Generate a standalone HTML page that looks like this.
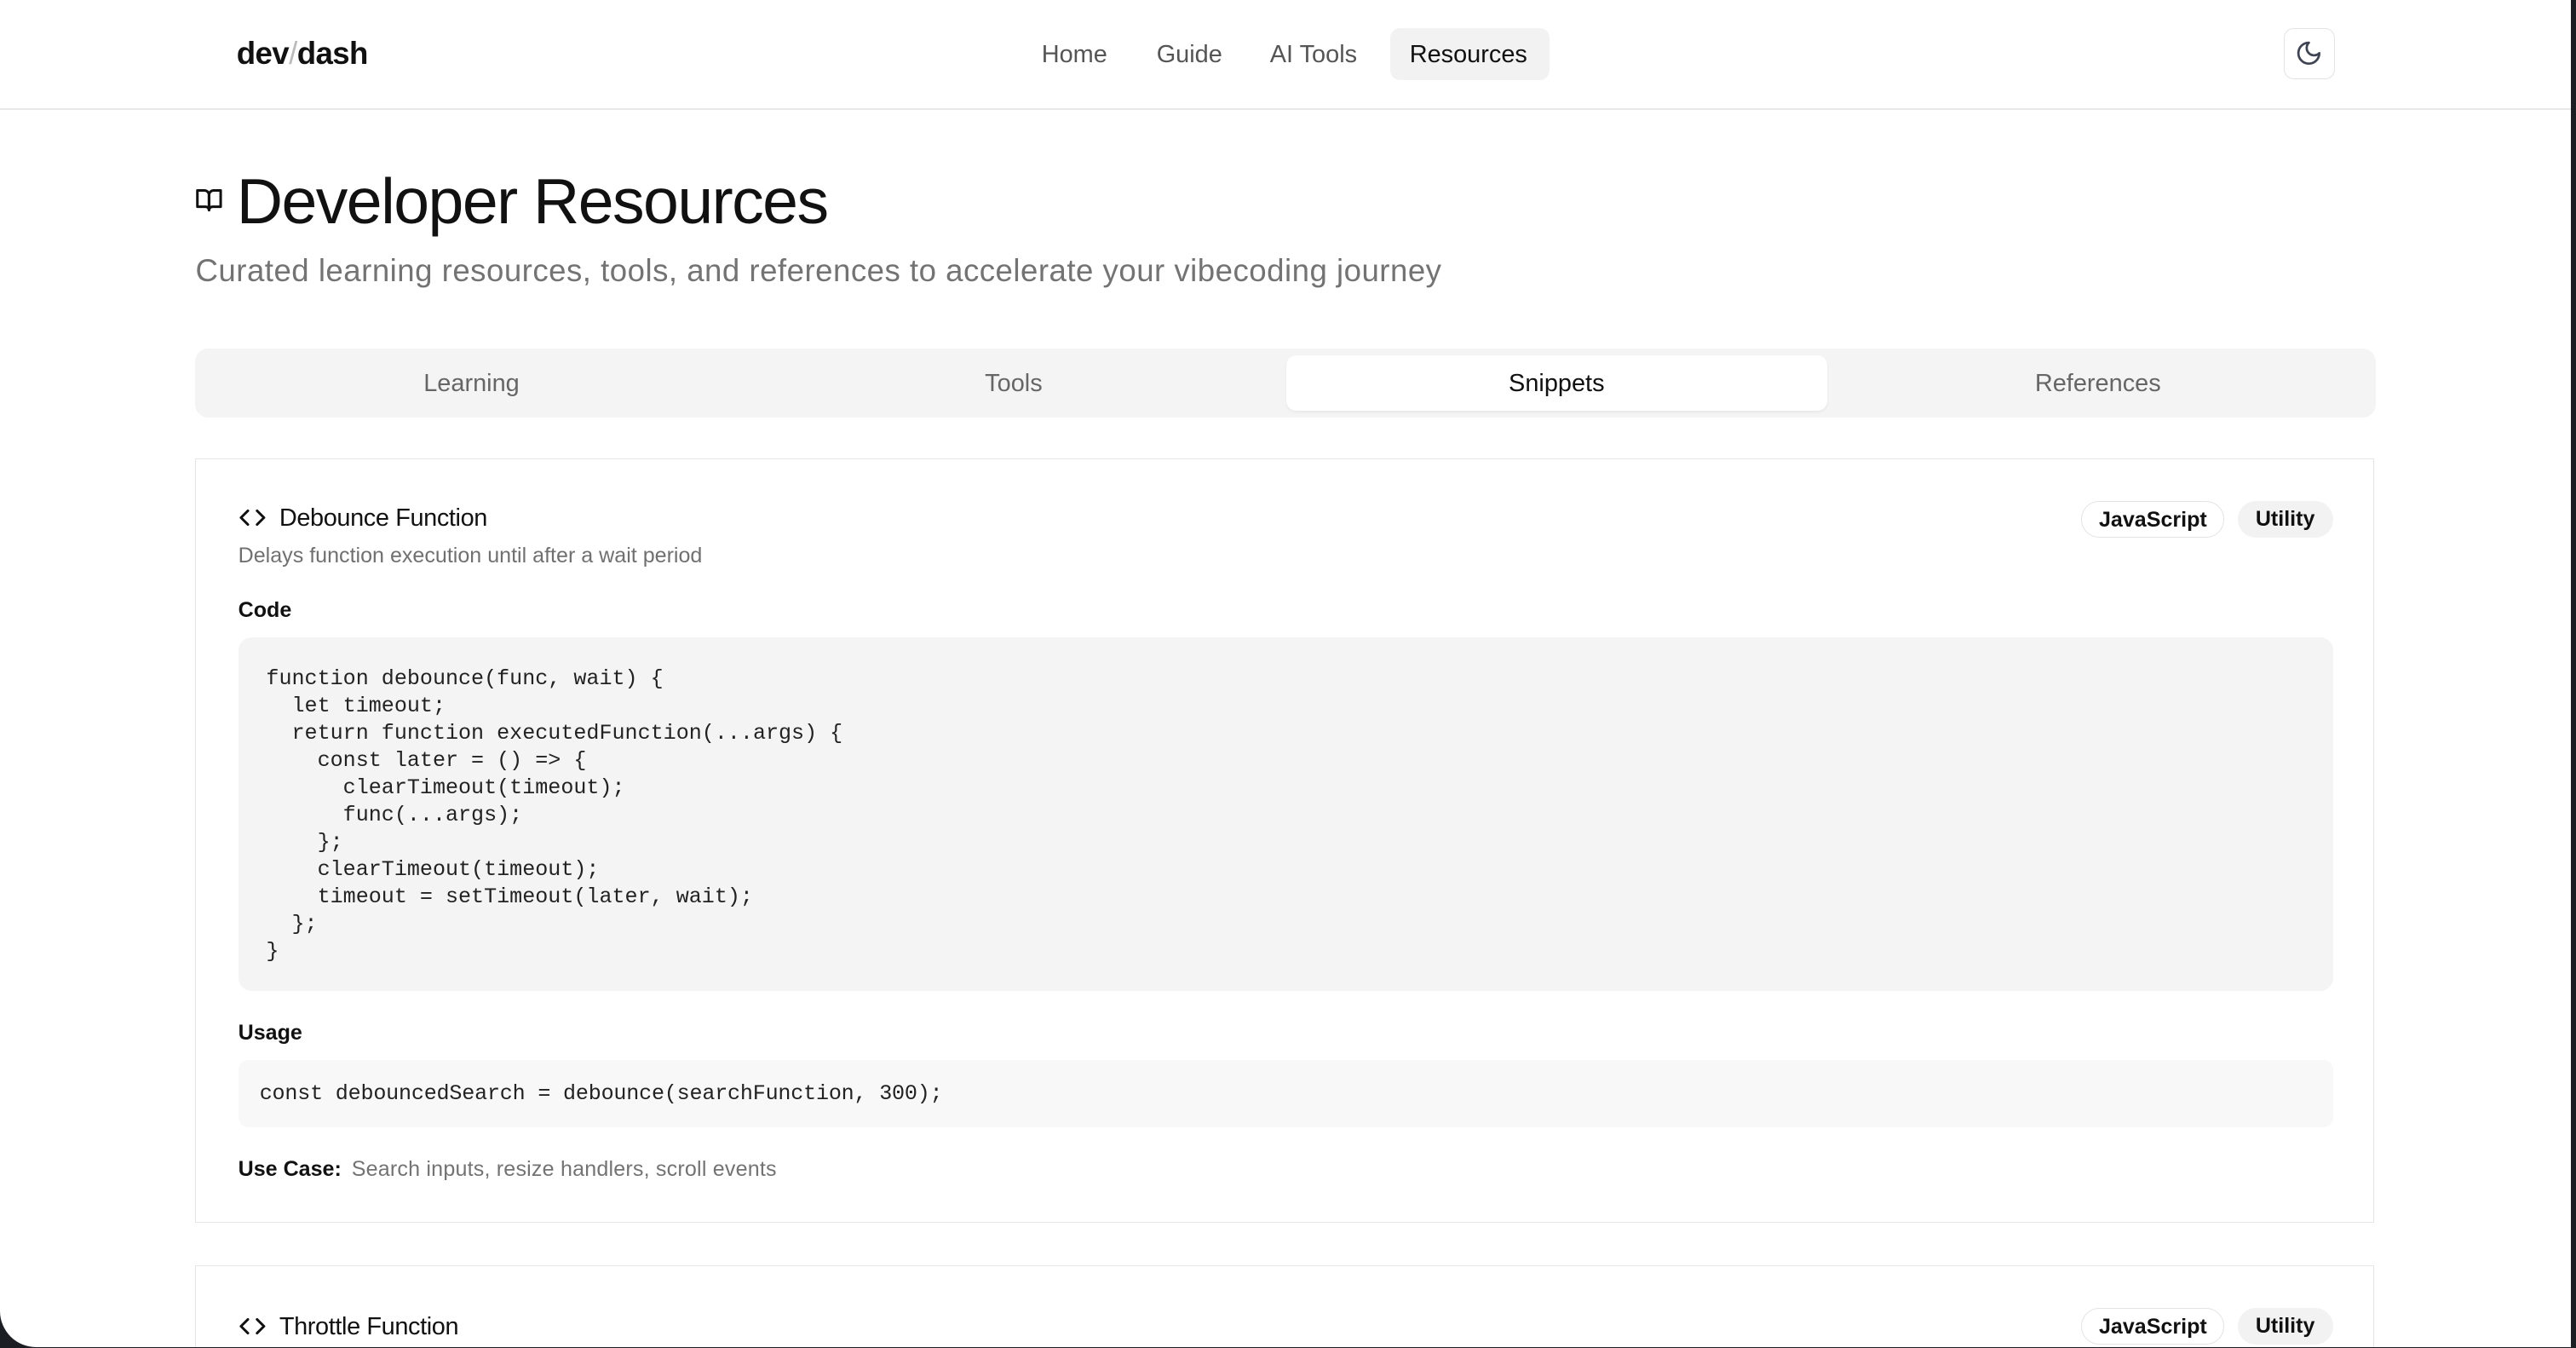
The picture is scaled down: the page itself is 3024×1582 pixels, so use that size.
<!DOCTYPE html>
<html><head><meta charset="utf-8"><style>
html,body{margin:0;padding:0;}
body{width:3024px;height:1582px;overflow:hidden;background:#1b1e22;font-family:"Liberation Sans",sans-serif;}
#z{zoom:1.92857;width:1568px;height:820px;position:relative;overflow:hidden;}
#page{position:absolute;left:0;top:0;width:1565px;height:820px;background:#fff;border-radius:0 0 0 22px;overflow:hidden;color:#111;}
.a{position:absolute;white-space:nowrap;}
.nav{font-size:15px;color:#555;top:25px;}
.mono{font-family:"Liberation Mono",monospace;font-size:13px;color:#222;}
.badge{position:absolute;height:22px;line-height:22px;border-radius:11px;font-size:13px;font-weight:bold;text-align:center;box-sizing:border-box;}
.lbl{font-size:13px;font-weight:bold;}
</style></head><body><div id="z"><div id="page">
<div class="a" style="left:0;top:66px;width:1565px;height:1px;background:#e8e8e8"></div>
<div class="a" style="left:144px;top:22px;font-size:19px;font-weight:bold;letter-spacing:-0.3px">dev<span style="color:#bbb;font-weight:normal">/</span>dash</div>
<div class="a nav" style="left:634px">Home</div>
<div class="a nav" style="left:704px">Guide</div>
<div class="a nav" style="left:773px">AI Tools</div>
<div class="a" style="left:846px;top:17px;width:97px;height:32px;background:#f2f2f2;border-radius:6px"></div>
<div class="a nav" style="left:858px;color:#111">Resources</div>
<div class="a" style="left:1390px;top:17px;width:30px;height:30px;border:1px solid #e3e3e6;border-radius:6px"></div>
<svg class="a" style="left:1397px;top:24px" width="17" height="17" viewBox="0 0 24 24" fill="none" stroke="#3f4452" stroke-width="2" stroke-linecap="round" stroke-linejoin="round"><path d="M12 3a6 6 0 0 0 9 9 9 9 0 1 1-9-9Z"/></svg>

<svg class="a" style="left:119px;top:113px" width="17" height="17" viewBox="0 0 24 24" fill="none" stroke="#111" stroke-width="2.2" stroke-linejoin="round"><path d="M2 4h6a4 4 0 0 1 4 4v13a3 3 0 0 0-3-3H2z"/><path d="M22 4h-6a4 4 0 0 0-4 4v13a3 3 0 0 1 3-3h7z"/></svg>
<div class="a" style="left:144px;top:100px;font-size:39px;letter-spacing:-0.8px">Developer Resources</div>
<div class="a" style="left:119px;top:154px;font-size:19px;color:#737373;letter-spacing:0.25px">Curated learning resources, tools, and references to accelerate your vibecoding journey</div>

<div class="a" style="left:119px;top:212px;width:1327px;height:42px;background:#f4f4f4;border-radius:8px"></div>
<div class="a" style="left:783px;top:216px;width:329px;height:34px;background:#fff;border-radius:6px;box-shadow:0 1px 2px rgba(0,0,0,.05)"></div>
<div class="a" style="left:119px;top:225px;width:336px;text-align:center;font-size:15px;color:#666">Learning</div>
<div class="a" style="left:451px;top:225px;width:332px;text-align:center;font-size:15px;color:#666">Tools</div>
<div class="a" style="left:783px;top:225px;width:329px;text-align:center;font-size:15px;color:#111">Snippets</div>
<div class="a" style="left:1112px;top:225px;width:330px;text-align:center;font-size:15px;color:#666">References</div>

<div class="a" style="left:119px;top:279px;width:1325px;height:464px;border:1px solid #e5e5e5"></div>
<svg class="a" style="left:145px;top:308px" width="17" height="14" viewBox="0 0 24 20" fill="none" stroke="#111" stroke-width="2.2" stroke-linecap="round" stroke-linejoin="round"><path d="M8 4 2 10l6 6M16 4l6 6-6 6"/></svg>
<div class="a" style="left:170px;top:307px;font-size:15px;letter-spacing:-0.2px">Debounce Function</div>
<div class="a" style="left:145px;top:331px;font-size:13px;color:#707070">Delays function execution until after a wait period</div>
<div class="badge" style="left:1267px;top:305px;width:87px;border:1px solid #e3e3e3">JavaScript</div>
<div class="badge" style="left:1362px;top:305px;width:58px;background:#f2f2f2">Utility</div>
<div class="a lbl" style="left:145px;top:364px">Code</div>
<div class="a" style="left:145px;top:388px;width:1275px;height:215px;background:#f4f4f4;border-radius:8px"></div>
<pre class="a mono" style="left:162px;top:405px;margin:0;line-height:16.6px;white-space:pre">function debounce(func, wait) {
  let timeout;
  return function executedFunction(...args) {
    const later = () =&gt; {
      clearTimeout(timeout);
      func(...args);
    };
    clearTimeout(timeout);
    timeout = setTimeout(later, wait);
  };
}</pre>
<div class="a lbl" style="left:145px;top:621px">Usage</div>
<div class="a" style="left:145px;top:645px;width:1275px;height:41px;background:#f8f8f8;border-radius:6px"></div>
<div class="a mono" style="left:158px;top:658px;letter-spacing:-0.1px">const debouncedSearch = debounce(searchFunction, 300);</div>
<div class="a lbl" style="left:145px;top:704px">Use Case:</div>
<div class="a" style="left:214px;top:704px;font-size:13px;color:#737373;letter-spacing:0.1px">Search inputs, resize handlers, scroll events</div>

<div class="a" style="left:119px;top:770px;width:1325px;height:60px;border:1px solid #e5e5e5;border-bottom:none"></div>
<svg class="a" style="left:145px;top:800px" width="17" height="14" viewBox="0 0 24 20" fill="none" stroke="#111" stroke-width="2.2" stroke-linecap="round" stroke-linejoin="round"><path d="M8 4 2 10l6 6M16 4l6 6-6 6"/></svg>
<div class="a" style="left:170px;top:799px;font-size:15px;letter-spacing:-0.2px">Throttle Function</div>
<div class="badge" style="left:1267px;top:796px;width:87px;border:1px solid #e3e3e3">JavaScript</div>
<div class="badge" style="left:1362px;top:796px;width:58px;background:#f2f2f2">Utility</div>
</div></div></body></html>
